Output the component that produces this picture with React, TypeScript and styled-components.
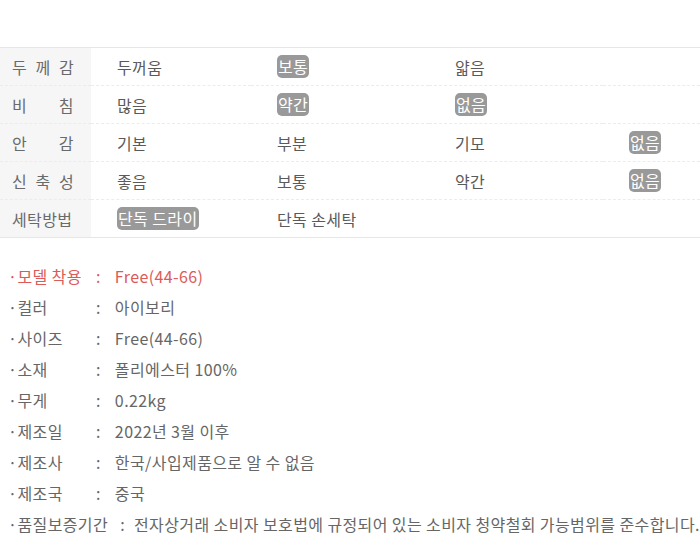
import React from "react";
import styled, { createGlobalStyle } from "styled-components";

const GlobalStyle = createGlobalStyle`
  body {
    margin: 0;
    background: #fff;
    font-family: "Noto Sans CJK KR", "Noto Sans", sans-serif;
  }
`;

const Page = styled.div`
  width: 700px;
  padding-top: 47px;
`;

const Table = styled.div`
  display: grid;
  grid-template-columns: 91px 160px 178px 174px 1fr;
  border-top: 1px solid #e6e6e6;
  border-bottom: 1px solid #e6e6e6;
`;

const LabelCell = styled.div<{ $last?: boolean }>`
  background: #f6f6f6;
  height: 37px;
  display: flex;
  align-items: center;
  padding-left: 12px;
  font-size: 16px;
  letter-spacing: 0.4px;
  color: #6a6a6a;
  border-bottom: ${({ $last }) => ($last ? "none" : "1px dashed #ececec")};
`;

const LabelText = styled.span`
  display: inline-block;
  width: 62px;
  white-space: nowrap;
  text-align: justify;
  text-align-last: justify;
`;

const ValueCell = styled.div<{ $last?: boolean }>`
  height: 37px;
  display: flex;
  align-items: center;
  padding-left: 26px;
  font-size: 16px;
  letter-spacing: 0.4px;
  color: #5a5a5a;
  border-bottom: ${({ $last }) => ($last ? "none" : "1px dashed #ececec")};
`;

const Badge = styled.span`
  display: inline-block;
  background: #999;
  color: #fff;
  border-radius: 5px;
  padding: 0 1px;
  line-height: 23px;
`;

const InfoList = styled.ul`
  list-style: none;
  margin: 22px 0 0;
  padding: 0 0 0 8px;
`;

const InfoRow = styled.li<{ $accent?: boolean }>`
  display: flex;
  height: 31px;
  align-items: center;
  font-size: 16px;
  letter-spacing: 0.4px;
  color: ${({ $accent }) => ($accent ? "#dc5a58" : "#666")};
  white-space: nowrap;
`;

const InfoLabel = styled.span<{ $wide?: boolean }>`
  min-width: 80px;
  padding-right: ${({ $wide }) => ($wide ? "12px" : "8px")};
`;

const Colon = styled.span<{ $tight?: boolean }>`
  margin-right: ${({ $tight }) => ($tight ? "9px" : "14px")};
`;

type Cell = { text: string; on?: boolean };

const rows: { label: string; cells: Cell[] }[] = [
  { label: "두께감", cells: [{ text: "두꺼움" }, { text: "보통", on: true }, { text: "얇음" }, { text: "" }] },
  { label: "비침", cells: [{ text: "많음" }, { text: "약간", on: true }, { text: "없음", on: true }, { text: "" }] },
  { label: "안감", cells: [{ text: "기본" }, { text: "부분" }, { text: "기모" }, { text: "없음", on: true }] },
  { label: "신축성", cells: [{ text: "좋음" }, { text: "보통" }, { text: "약간" }, { text: "없음", on: true }] },
  { label: "세탁방법", cells: [{ text: "단독 드라이", on: true }, { text: "단독 손세탁" }, { text: "" }, { text: "" }] },
];

const info = [
  ["모델 착용", "Free(44-66)"],
  ["컬러", "아이보리"],
  ["사이즈", "Free(44-66)"],
  ["소재", "폴리에스터 100%"],
  ["무게", "0.22kg"],
  ["제조일", "2022년 3월 이후"],
  ["제조사", "한국/사입제품으로 알 수 없음"],
  ["제조국", "중국"],
  ["품질보증기간", "전자상거래 소비자 보호법에 규정되어 있는 소비자 청약철회 가능범위를 준수합니다."],
];

export default function App() {
  return (
    <Page>
      <GlobalStyle />
      <Table>
        {rows.map((row, i) => {
          const last = i === rows.length - 1;
          const label = row.label.length < 4 ? row.label.split("").join(" ") : row.label;
          return (
            <React.Fragment key={row.label}>
              <LabelCell $last={last}>
                <LabelText>{label}</LabelText>
              </LabelCell>
              {row.cells.map((c, j) => (
                <ValueCell key={j} $last={last}>
                  {c.on ? <Badge>{c.text}</Badge> : c.text}
                </ValueCell>
              ))}
            </React.Fragment>
          );
        })}
      </Table>
      <InfoList>
        {info.map(([k, v], i) => {
          const wide = k.length > 5;
          return (
            <InfoRow key={k} $accent={i === 0}>
              <InfoLabel $wide={wide}>·{k}</InfoLabel>
              <Colon $tight={wide}>:</Colon>
              <span>{v}</span>
            </InfoRow>
          );
        })}
      </InfoList>
    </Page>
  );
}
